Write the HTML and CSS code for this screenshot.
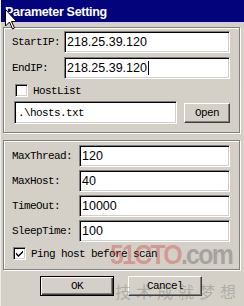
FILE: index.html
```html
<!DOCTYPE html>
<html>
<head>
<meta charset="utf-8">
<link rel="stylesheet" href="styles.css">
</head>
<body>
<div class="window">
  <div class="titlebar"><span class="title">Parameter Setting</span></div>
  <div class="client">
    <div class="group g1">
      <div class="row r-ip">
        <span class="lbl">StartIP:</span>
        <div class="edit ip">218.25.39.120</div>
      </div>
      <div class="row r-ip">
        <span class="lbl">EndIP:</span>
        <div class="edit ip">218.25.39.120<span class="caret"></span></div>
      </div>
      <div class="check-row c1">
        <span class="box"></span>
        <span class="lbl">HostList</span>
      </div>
      <div class="file-row">
        <div class="edit mono">.\hosts.txt</div>
        <div class="btn open"><span>Open</span></div>
      </div>
    </div>
    <div class="group g2">
      <div class="row r-num"><span class="lbl">MaxThread:</span><div class="edit">120</div></div>
      <div class="row r-num"><span class="lbl">MaxHost:</span><div class="edit">40</div></div>
      <div class="row r-num"><span class="lbl">TimeOut:</span><div class="edit">10000</div></div>
      <div class="row r-num"><span class="lbl">SleepTime:</span><div class="edit">100</div></div>
      <div class="check-row c2">
        <span class="box checked"><svg width="9" height="9" viewBox="0 0 9 9"><path d="M1 3.5 L3.5 6 L8 1.5 L8 3.5 L3.5 8 L1 5.5 Z" fill="#000"/></svg></span>
        <span class="lbl">Ping host before scan</span>
      </div>
    </div>
    <div class="buttons">
      <div class="btn ok"><span>OK</span></div>
      <div class="btn cancel"><span>Cancel</span></div>
    </div>
  </div>
  <div class="watermark">
    <div class="wm-logo"><span class="wm-red">51CTO</span><span class="wm-gray">.com</span></div>
    <div class="wm-cn">技术成就梦想</div>
  </div>
  <svg class="cursor" width="12" height="21" viewBox="0 0 12 21"><path d="M0.5 0.5 L0.5 17 L4.5 13 L7.5 20 L9.5 19 L6.5 12.5 L11.5 12.5 Z" fill="#fff" stroke="#000" stroke-width="1"/></svg>
</div>
</body>
</html>
```
FILE: styles.css
```css
html, body {
  margin: 0;
  padding: 0;
  background: #d4d0c8;
}
.window {
  position: relative;
  width: 244px;
  height: 306px;
  background: #d4d0c8;
  overflow: hidden;
  box-sizing: border-box;
  border-left: 1px solid #eeece6;
}
.titlebar {
  height: 22px;
  background: #03037c;
  display: flex;
  align-items: center;
  padding-left: 4px;
}
.title {
  color: #fff;
  font-family: "Liberation Sans", Arial, sans-serif;
  font-weight: bold;
  font-size: 12.5px;
  letter-spacing: -0.3px;
  padding-top: 1px;
}
.client {
  display: flex;
  flex-direction: column;
  padding: 5px 4px 0 2px;
}
.group {
  border: 1px solid #808080;
  box-shadow: inset 1px 1px #fff, 1px 1px #fff;
  box-sizing: border-box;
  width: 237px;
}
.g1 {
  height: 106px;
  padding: 3px 9px 0 8px;
}
.g2 {
  margin-top: 7px;
  height: 130px;
  padding: 4px 9px 0 8px;
}
.lbl {
  font-family: "Liberation Mono", monospace;
  font-size: 11px;
  letter-spacing: -0.6px;
  color: #000;
  white-space: nowrap;
}
.row {
  display: flex;
  align-items: center;
  height: 22px;
}
.r-ip { margin-bottom: 4px; }
.r-ip .lbl { width: 52px; flex: none; }
.r-num { margin-bottom: 3px; }
.r-num .lbl { width: 67px; flex: none; }
.edit {
  flex: 1;
  height: 22px;
  box-sizing: border-box;
  background: #fff;
  border: 1px solid;
  border-color: #808080 #fff #fff #808080;
  box-shadow: inset 1px 1px #000, inset -1px -1px #d4d0c8;
  font-family: "Liberation Sans", Arial, sans-serif;
  font-size: 12.5px;
  color: #000;
  display: flex;
  align-items: center;
  padding-left: 2px;
  white-space: nowrap;
}
.caret {
  display: inline-block;
  width: 1px;
  height: 14px;
  background: #000;
  margin-left: 1px;
}
.edit.mono {
  font-family: "Liberation Mono", monospace;
  font-size: 11px;
  letter-spacing: -0.6px;
  padding-left: 3px;
}
.check-row {
  display: flex;
  align-items: center;
  gap: 5px;
}
.c1 {
  margin-top: 2px;
  padding-left: 3px;
  height: 15px;
}
.c2 {
  margin-top: 4px;
  padding-left: 1px;
  height: 15px;
}
.box {
  width: 13px;
  height: 13px;
  box-sizing: border-box;
  background: #fff;
  border: 1px solid;
  border-color: #808080 #fff #fff #808080;
  box-shadow: inset 1px 1px #000, inset -1px -1px #d4d0c8;
  display: flex;
  align-items: center;
  justify-content: center;
  flex: none;
}
.file-row {
  display: flex;
  align-items: center;
  margin-top: 3px;
  padding-left: 2px;
  gap: 7px;
}
.file-row .edit { height: 23px; }
.btn {
  box-sizing: border-box;
  background: #d4d0c8;
  border: 1px solid;
  border-color: #fff #404040 #404040 #fff;
  box-shadow: inset -1px -1px #808080;
  display: flex;
  align-items: center;
  justify-content: center;
  font-family: "Liberation Mono", monospace;
  font-size: 11px;
  letter-spacing: -0.6px;
  color: #000;
}
.open {
  width: 46px;
  height: 20px;
  flex: none;
}
.buttons {
  display: flex;
  gap: 14px;
  margin-top: 6px;
  padding-left: 37px;
}
.ok, .cancel {
  width: 74px;
  height: 20px;
}
.ok {
  border: 1px solid #000;
  box-shadow: inset 1px 1px #fff, inset -1px -1px #404040, inset -2px -2px #808080;
}
.watermark {
  position: absolute;
  left: 109px;
  top: 240px;
  pointer-events: none;
}
.wm-logo {
  font-family: "Liberation Sans", Arial, sans-serif;
  font-weight: bold;
  font-size: 28px;
  line-height: 30px;
  letter-spacing: -2px;
  transform: scaleX(0.89);
  transform-origin: left top;
  white-space: nowrap;
}
.wm-red { color: rgba(205, 50, 50, 0.35); }
.wm-gray { color: rgba(90, 90, 90, 0.4); }
.wm-cn {
  margin-top: 12px;
  margin-left: 5px;
  font-family: "Noto Sans CJK SC", sans-serif;
  font-size: 16px;
  line-height: 18px;
  letter-spacing: 5px;
  color: rgba(80, 80, 80, 0.3);
  white-space: nowrap;
}
.cursor {
  position: absolute;
  left: 4px;
  top: 9px;
}
```
